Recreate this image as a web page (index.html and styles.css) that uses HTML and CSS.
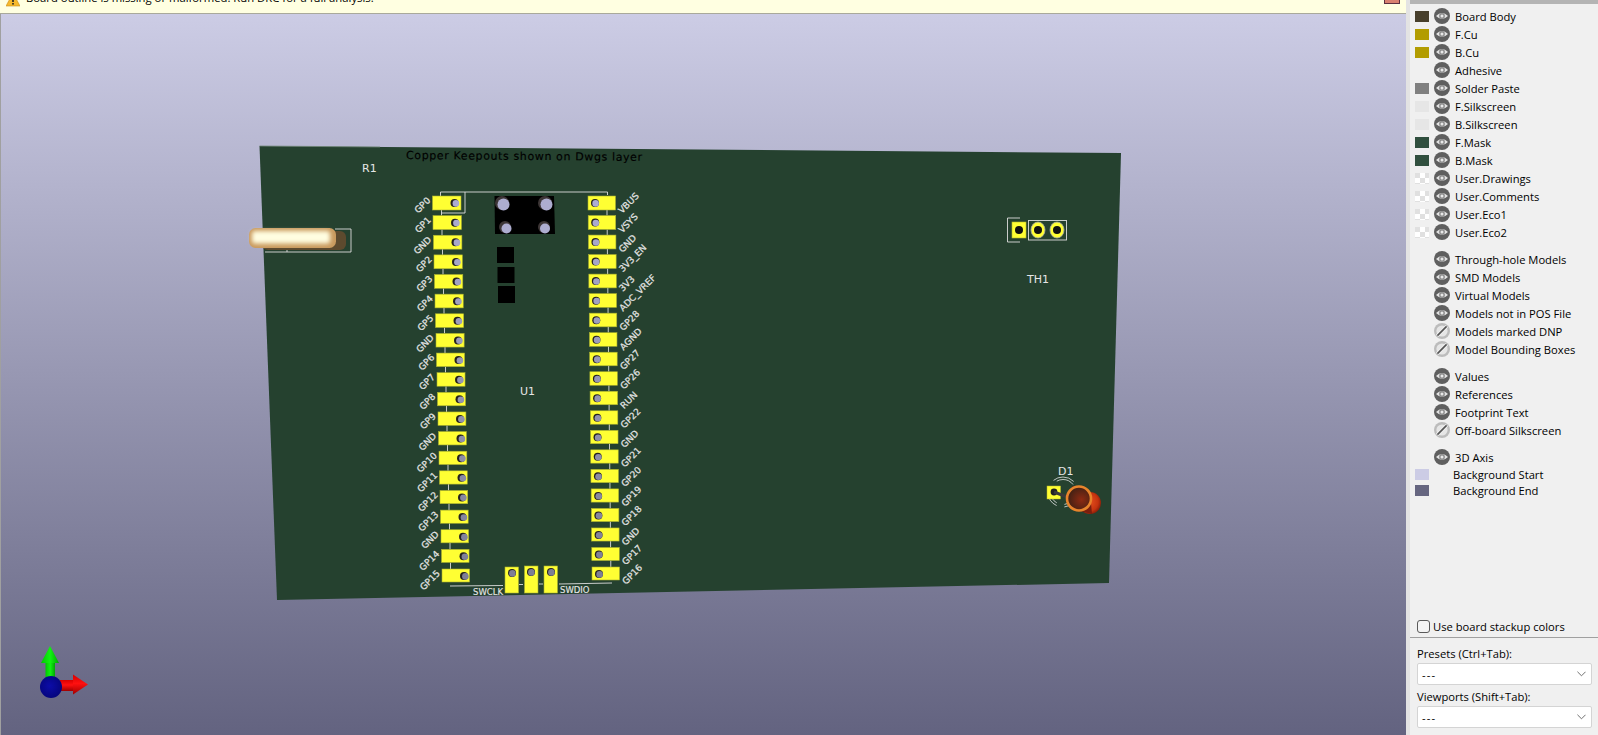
FILE: index.html
```html
<!DOCTYPE html>
<html lang="en">

<head>
    <meta charset="UTF-8">
    <title>3D Viewer</title>
    <link rel="stylesheet" href="styles.css">
</head>

<body>
    <svg class="defs" width="0" height="0">
        <symbol id="eye-on" viewBox="0 0 16 16">
            <circle cx="8" cy="8" r="8" fill="#5f5f5f" />
            <path d="M2 8 Q8 2.2 14 8 Q8 13.8 2 8Z" fill="#e4e4e4" />
            <circle cx="8" cy="8" r="2.9" fill="#8c8c8c" />
            <circle cx="8" cy="8" r="1.5" fill="#e8e8e8" />
        </symbol>
        <symbol id="eye-off" viewBox="0 0 16 16">
            <circle cx="8" cy="8" r="8" fill="#bcbcbc" />
            <circle cx="8" cy="8" r="5.6" fill="#e6e6e6" />
            <path d="M3.2 12.8 L12.8 3.2" stroke="#f2f2f2" stroke-width="3.6" />
            <path d="M3.4 12.6 L12.6 3.4" stroke="#555" stroke-width="1.7" />
        </symbol>
        <symbol id="chevron" viewBox="0 0 10 6">
            <path d="M0.5 0.5 L5 5 L9.5 0.5" fill="none" stroke="#606060" stroke-width="1" />
        </symbol>
    </svg>

    <main class="viewer">
        <!-- 提示条 -->
        <div class="infobar">
            <svg class="warn-icon" width="14" height="14" viewBox="0 0 14 14">
                <path d="M7 0 L14 13 H0Z" fill="#f6b92d" stroke="#c98a10" stroke-width="0.6" />
                <rect x="6.2" y="4" width="1.6" height="5" fill="#222" />
                <rect x="6.2" y="10" width="1.6" height="1.6" fill="#222" />
            </svg>
            <span class="infobar-text">Board outline is missing or malformed. Run DRC for a full analysis.</span>
            <span class="infobar-close"></span>
        </div>

        <!-- 3D 画布 -->
        <div class="canvas">
            <svg id="scene" class="scene" width="1405" height="721" viewBox="1 14 1405 721">
                <defs>
                    <filter id="soft" x="-20%" y="-60%" width="140%" height="220%">
                        <feGaussianBlur stdDeviation="1.9" />
                    </filter>
                    <radialGradient id="led-body" cx="0.45" cy="0.45" r="0.6">
                        <stop offset="0" stop-color="#e8521f" />
                        <stop offset="0.7" stop-color="#c5330f" />
                        <stop offset="1" stop-color="#7d1a08" />
                    </radialGradient>
                    <radialGradient id="led-top" cx="0.6" cy="0.55" r="0.6">
                        <stop offset="0" stop-color="#8d2a12" />
                        <stop offset="1" stop-color="#3d2014" />
                    </radialGradient>
                    <linearGradient id="axis-green" x1="0" x2="1" y1="0" y2="0">
                        <stop offset="0" stop-color="#00c800" />
                        <stop offset="0.5" stop-color="#12f212" />
                        <stop offset="1" stop-color="#00a800" />
                    </linearGradient>
                    <linearGradient id="axis-red" x1="0" x2="0" y1="0" y2="1">
                        <stop offset="0" stop-color="#d80000" />
                        <stop offset="0.45" stop-color="#ff1010" />
                        <stop offset="1" stop-color="#a00000" />
                    </linearGradient>
                    <radialGradient id="axis-blue" cx="0.45" cy="0.45" r="0.6">
                        <stop offset="0" stop-color="#0c0ca8" />
                        <stop offset="1" stop-color="#05057a" />
                    </radialGradient>
                </defs>

                <polygon class="board" points="259.5,146 1121,153 1109,583 277,600" />
                <polyline class="board-edge" points="259.5,146 380,147" />
                <text class="dwgs-text" x="406" y="159" transform="rotate(0.45 406 159)">Copper Keepouts shown on Dwgs layer</text>
                <text class="silk" x="362" y="172">R1</text>
                <text class="silk" x="520" y="395">U1</text>
                <text class="silk" x="1027" y="283">TH1</text>
                <text class="silk" x="1058" y="475">D1</text>

                <!-- R1 -->
                <polyline class="silk-line" points="335,229 351,229 351,252 265,252" />
                <line class="silk-line" x1="287" y1="250" x2="287" y2="252" />
                <rect x="262" y="231" width="84" height="19" rx="6" fill="#5d4a2e" />
                <rect x="249" y="228" width="87" height="20" rx="6.5" fill="#c99a5e" />
                <rect x="252" y="231" width="78" height="12.5" rx="3" fill="#fffde0" filter="url(#soft)" />

                <!-- U1 外框 -->
                <polyline class="silk-line" points="440.5,196 440.5,192 607.5,192 607.5,195" />
                <polyline class="silk-line" points="441,213 465,213 465,192" />
                <g id="pins"></g>

                <!-- 按键 -->
                <polygon points="494.5,196 554,196 555,234 495,234" fill="#000" />
                <circle cx="502" cy="203" r="7" fill="#3d3636" />
                <circle cx="503.5" cy="204.5" r="6" fill="#adadd0" />
                <circle cx="545" cy="203" r="7" fill="#3d3636" />
                <circle cx="546.5" cy="204.5" r="6" fill="#adadd0" />
                <circle cx="505" cy="227" r="6" fill="#3d3636" />
                <circle cx="506.5" cy="228.5" r="5" fill="#adadd0" />
                <circle cx="544" cy="227" r="6" fill="#3d3636" />
                <circle cx="545" cy="228.5" r="5" fill="#adadd0" />
                <rect x="497" y="247" width="17" height="16" fill="#000" />
                <rect x="497.5" y="267" width="17" height="16" fill="#000" />
                <rect x="498" y="286" width="17" height="17" fill="#000" />

                <!-- SWD -->
                <line class="silk-line" x1="450" y1="586" x2="503" y2="585.5" />
                <line class="silk-line" x1="559" y1="584" x2="612" y2="583" />
                <line class="silk-line" x1="519" y1="584.5" x2="523" y2="584.5" />
                <line class="silk-line" x1="539" y1="584" x2="543" y2="584" />
                <text class="silk silk-small" x="473" y="595">SWCLK</text>
                <text class="silk silk-small" x="560" y="593">SWDIO</text>

                <!-- TH1 -->
                <polyline class="silk-line" points="1020,218 1007.5,218 1007.5,242 1020,242" />
                <rect class="silk-line" x="1028.5" y="220.5" width="38" height="19.5" />
                <rect x="1012" y="222" width="14" height="16" fill="#ffff33" stroke="#b7b82c" stroke-width="0.6" />
                <circle cx="1019" cy="230" r="4" fill="#111" />
                <ellipse cx="1038" cy="230" rx="7" ry="8" fill="#ffff33" stroke="#aaa" stroke-width="0.8" />
                <circle cx="1038" cy="230" r="4" fill="#111" />
                <ellipse cx="1057" cy="230" rx="7" ry="8" fill="#ffff33" stroke="#aaa" stroke-width="0.8" />
                <circle cx="1057" cy="230" r="4" fill="#111" />

                <!-- D1 -->
                <circle cx="1063" cy="492" r="15" fill="none" stroke="#e6e6e6" stroke-width="0.8" stroke-dasharray="22 8" />
                <circle cx="1063" cy="492" r="12.5" fill="none" stroke="#e6e6e6" stroke-width="0.8" stroke-dasharray="18 8" />
                <rect x="1047" y="486" width="13.5" height="13" fill="#ffff33" stroke="#b7b82c" stroke-width="0.5" />
                <circle cx="1054" cy="492" r="3.4" fill="#222" />
                <line x1="1054" y1="492" x2="1070" y2="498" stroke="#3a3a3a" stroke-width="3" />
                <circle cx="1090" cy="503" r="11" fill="url(#led-body)" />
                <path d="M1072 486 L1090 492 L1092 514 L1080 511Z" fill="#7a1e0e" />
                <circle cx="1079" cy="498.5" r="12" fill="url(#led-top)" stroke="#e8842c" stroke-width="2.6" />

                <!-- 坐标轴 -->
                <rect x="45.5" y="660" width="9.5" height="20" fill="url(#axis-green)" />
                <polygon points="50,646 59,663 41,663" fill="url(#axis-green)" />
                <rect x="60" y="680" width="15" height="11" fill="url(#axis-red)" />
                <polygon points="88,684.5 73,674.5 73,694.5" fill="url(#axis-red)" />
                <circle cx="51" cy="687" r="11" fill="url(#axis-blue)" />
            </svg>
        </div>
    </main>

    <aside class="sidebar">
        <div class="layer-group">
            <div class="row"><span class="swatch swatch-body"></span><svg class="eye"><use href="#eye-on" /></svg><span>Board Body</span></div>
            <div class="row"><span class="swatch swatch-cu"></span><svg class="eye"><use href="#eye-on" /></svg><span>F.Cu</span></div>
            <div class="row"><span class="swatch swatch-cu"></span><svg class="eye"><use href="#eye-on" /></svg><span>B.Cu</span></div>
            <div class="row"><span class="swatch"></span><svg class="eye"><use href="#eye-on" /></svg><span>Adhesive</span></div>
            <div class="row"><span class="swatch swatch-paste"></span><svg class="eye"><use href="#eye-on" /></svg><span>Solder Paste</span></div>
            <div class="row"><span class="swatch swatch-silk"></span><svg class="eye"><use href="#eye-on" /></svg><span>F.Silkscreen</span></div>
            <div class="row"><span class="swatch swatch-silk"></span><svg class="eye"><use href="#eye-on" /></svg><span>B.Silkscreen</span></div>
            <div class="row"><span class="swatch swatch-mask"></span><svg class="eye"><use href="#eye-on" /></svg><span>F.Mask</span></div>
            <div class="row"><span class="swatch swatch-mask"></span><svg class="eye"><use href="#eye-on" /></svg><span>B.Mask</span></div>
            <div class="row"><span class="swatch swatch-user"></span><svg class="eye"><use href="#eye-on" /></svg><span>User.Drawings</span></div>
            <div class="row"><span class="swatch swatch-user"></span><svg class="eye"><use href="#eye-on" /></svg><span>User.Comments</span></div>
            <div class="row"><span class="swatch swatch-user"></span><svg class="eye"><use href="#eye-on" /></svg><span>User.Eco1</span></div>
            <div class="row"><span class="swatch swatch-user"></span><svg class="eye"><use href="#eye-on" /></svg><span>User.Eco2</span></div>
        </div>

        <div class="layer-group">
            <div class="row"><span class="swatch"></span><svg class="eye"><use href="#eye-on" /></svg><span>Through-hole Models</span></div>
            <div class="row"><span class="swatch"></span><svg class="eye"><use href="#eye-on" /></svg><span>SMD Models</span></div>
            <div class="row"><span class="swatch"></span><svg class="eye"><use href="#eye-on" /></svg><span>Virtual Models</span></div>
            <div class="row"><span class="swatch"></span><svg class="eye"><use href="#eye-on" /></svg><span>Models not in POS File</span></div>
            <div class="row"><span class="swatch"></span><svg class="eye"><use href="#eye-off" /></svg><span>Models marked DNP</span></div>
            <div class="row"><span class="swatch"></span><svg class="eye"><use href="#eye-off" /></svg><span>Model Bounding Boxes</span></div>
        </div>

        <div class="layer-group">
            <div class="row"><span class="swatch"></span><svg class="eye"><use href="#eye-on" /></svg><span>Values</span></div>
            <div class="row"><span class="swatch"></span><svg class="eye"><use href="#eye-on" /></svg><span>References</span></div>
            <div class="row"><span class="swatch"></span><svg class="eye"><use href="#eye-on" /></svg><span>Footprint Text</span></div>
            <div class="row"><span class="swatch"></span><svg class="eye"><use href="#eye-off" /></svg><span>Off-board Silkscreen</span></div>
        </div>

        <div class="layer-group">
            <div class="row"><span class="swatch"></span><svg class="eye"><use href="#eye-on" /></svg><span>3D Axis</span></div>
            <div class="row row-bg"><span class="swatch swatch-start"></span><span>Background Start</span></div>
            <div class="row row-bg"><span class="swatch swatch-end"></span><span>Background End</span></div>
        </div>

        <label class="stackup"><input type="checkbox" class="check"><span>Use board stackup colors</span></label>

        <div class="presets">
            <div class="combo-label">Presets (Ctrl+Tab):</div>
            <div class="combo"><span class="combo-value">---</span><svg class="chevron"><use href="#chevron" /></svg></div>
            <div class="combo-label">Viewports (Shift+Tab):</div>
            <div class="combo"><span class="combo-value">---</span><svg class="chevron"><use href="#chevron" /></svg></div>
        </div>
    </aside>

    <script src="script.js"></script>
</body>

</html>
```

FILE: styles.css
```css
* {
    box-sizing: border-box;
}

html,
body {
    height: 100%;
}

body {
    margin: 0;
    display: flex;
    overflow: hidden;
    background-color: #e3e3e3;
    font-family: "Open Sans", "Liberation Sans", sans-serif;
    font-size: 11.2px;
    color: #000;
}

.defs {
    position: absolute;
}

.viewer {
    width: 1406px;
    height: 100%;
    display: flex;
    flex-direction: column;
}

.infobar {
    height: 14px;
    flex: none;
    display: flex;
    align-items: flex-end;
    padding: 0 6px 7px 6px;
    background-color: #ffffe1;
    border-bottom: 1px solid #a9a99b;
    overflow: hidden;
}

.warn-icon {
    flex: none;
    margin-bottom: -1px;
}

.infobar-text {
    flex: none;
    margin-left: 6px;
    font-size: 11.3px;
    line-height: 16px;
}

.infobar-close {
    flex: none;
    width: 16px;
    height: 16px;
    margin-left: auto;
    margin-right: 0;
    margin-bottom: 2px;
    background-color: #d98070;
    border: 1px solid #5a3040;
}

.canvas {
    flex: 1;
    min-height: 0;
    border-left: 1px solid #a0a0a0;
    background: linear-gradient(#cccce5, #636380);
    overflow: hidden;
}

.scene {
    display: block;
}

.board {
    fill: #25412f;
}

.board-edge {
    fill: none;
    stroke: #6d8474;
    stroke-width: 0.8;
}

.dwgs-text {
    font-family: "DejaVu Sans", sans-serif;
    font-size: 11px;
    letter-spacing: 0.62px;
    fill: #000;
    stroke: #000;
    stroke-width: 0.15;
}

.silk {
    font-family: "DejaVu Sans", sans-serif;
    font-size: 11px;
    fill: #e6e6e6;
}

.silk-small {
    font-size: 8.5px;
    stroke: #e6e6e6;
    stroke-width: 0.15;
}

.silk-line {
    fill: none;
    stroke: #dcdcdc;
    stroke-width: 0.9;
}

.pin-pad {
    fill: #ffff33;
    stroke: #a9b030;
    stroke-width: 0.6;
}

.pin-label {
    font-family: "DejaVu Sans", sans-serif;
    font-size: 9px;
    fill: #e6e6e6;
    stroke: #e6e6e6;
    stroke-width: 0.22;
}

.sidebar {
    width: 188px;
    height: 100%;
    margin-left: 4px;
    flex: none;
    display: flex;
    flex-direction: column;
    padding-top: 3px;
    background-color: #f0f0f0;
    border-top: 4px solid #b4b4b4;
}

.layer-group {
    margin-bottom: 9px;
}

.row {
    height: 18px;
    display: flex;
    align-items: center;
    padding-left: 5px;
    white-space: nowrap;
}

.row-bg {
    height: 16px;
}

.swatch {
    width: 14px;
    height: 11px;
    flex: none;
    margin-right: 5px;
}

.row-bg .swatch {
    margin-right: 24px;
}

.swatch-body {
    background-color: #473f2c;
}

.swatch-cu {
    background-color: #b29c00;
}

.swatch-paste {
    background-color: #808080;
}

.swatch-silk {
    background-color: #e6e6e6;
}

.swatch-mask {
    background-color: #31503f;
}

.swatch-user {
    background: repeating-conic-gradient(#fff 0 25%, #e0e0e0 0 50%) 0 0 / 10px 10px;
}

.swatch-start {
    background-color: #cccce5;
}

.swatch-end {
    background-color: #666680;
}

.eye {
    width: 16px;
    height: 16px;
    flex: none;
    margin-right: 5px;
}

.stackup {
    margin-top: auto;
    height: 17px;
    display: flex;
    align-items: center;
    padding-left: 7px;
    gap: 3px;
}

.check {
    appearance: none;
    width: 13px;
    height: 13px;
    margin: 0;
    background-color: #f4f4f4;
    border: 1px solid #5a5a5a;
    border-radius: 3px;
}

.presets {
    margin-top: 2px;
    padding: 8px 6px 7px 7px;
    border-top: 1px solid #a0a0a0;
}

.combo-label {
    height: 16px;
    line-height: 16px;
    margin-bottom: 1px;
}

.combo {
    height: 22px;
    display: flex;
    align-items: center;
    justify-content: space-between;
    margin-bottom: 4px;
    padding: 0 5px 0 4px;
    background-color: #fff;
    border: 1px solid #d4d4d4;
    border-radius: 2px;
}

.combo:last-child {
    margin-bottom: 0;
}

.combo-value {
    letter-spacing: 1.2px;
}

.chevron {
    width: 9px;
    height: 6px;
}
```

FILE: script.js
```js
// 排针：左右两列，各 20 个
let svgNS = 'http://www.w3.org/2000/svg',
    pins = document.querySelector('#pins');

let leftNames = ['GP0', 'GP1', 'GND', 'GP2', 'GP3', 'GP4', 'GP5', 'GND', 'GP6', 'GP7',
    'GP8', 'GP9', 'GND', 'GP10', 'GP11', 'GP12', 'GP13', 'GND', 'GP14', 'GP15'];
let rightNames = ['VBUS', 'VSYS', 'GND', '3V3_EN', '3V3', 'ADC_VREF', 'GP28', 'AGND', 'GP27', 'GP26',
    'RUN', 'GP22', 'GND', 'GP21', 'GP20', 'GP19', 'GP18', 'GND', 'GP17', 'GP16'];

function add(tag, attrs, text) {
    let el = document.createElementNS(svgNS, tag);
    for (let key in attrs) {
        el.setAttribute(key, attrs[key]);
    }
    if (text) {
        el.textContent = text;
    }
    pins.appendChild(el);
}

// 孔的颜色从上到下变暗
function holeColor(t) {
    let r = Math.round(172 - t * 46),
        b = Math.round(208 - t * 58);
    return 'rgb(' + r + ',' + r + ',' + b + ')';
}

function drawPad(x, y, w, h, hx, hy, t, shift) {
    add('rect', { class: 'pin-pad', x: x, y: y, width: w, height: h });
    add('circle', { cx: hx, cy: hy, r: 4, fill: '#25221f' });
    add('circle', { cx: hx + shift, cy: hy + 0.4, r: 3.3, fill: holeColor(t) });
}

leftNames.forEach((name, i) => {
    let t = i / 19,
        x = 432.5 + t * 9.5,
        y = 196 + t * 373,
        w = 28.5 - t * 1,
        h = 14 - t * 1;
    if (i < 19) {
        add('line', { class: 'silk-line', x1: x + 9, y1: y + h, x2: x + 9, y2: y + 19.6 });
    }
    drawPad(x, y, w, h, x + 22, y + 7, t, 1.4);
    add('text', {
        class: 'pin-label',
        x: x - 1.5,
        y: y + 5,
        'text-anchor': 'end',
        transform: 'rotate(-45 ' + (x - 1.5) + ' ' + (y + 5) + ')'
    }, name);
});

rightNames.forEach((name, i) => {
    let t = i / 19,
        x = 588 + t * 4,
        y = 196 + t * 371,
        w = 27.5,
        h = 14 - t * 1;
    if (i < 19) {
        add('line', { class: 'silk-line', x1: x + 19, y1: y + h, x2: x + 19, y2: y + 19.5 });
    }
    drawPad(x, y, w, h, x + 7, y + 7, t, 0.6);
    add('text', {
        class: 'pin-label',
        x: x + 34,
        y: y + 18,
        transform: 'rotate(-45 ' + (x + 34) + ' ' + (y + 18) + ')'
    }, name);
});

// SWD 三个焊盘
[[505, 567, 512], [524.5, 566, 531], [544, 566, 551]].forEach(p => {
    drawPad(p[0], p[1], 13.5, 593 - p[1], p[2], p[1] + 6, 1, 0.4);
});
```
